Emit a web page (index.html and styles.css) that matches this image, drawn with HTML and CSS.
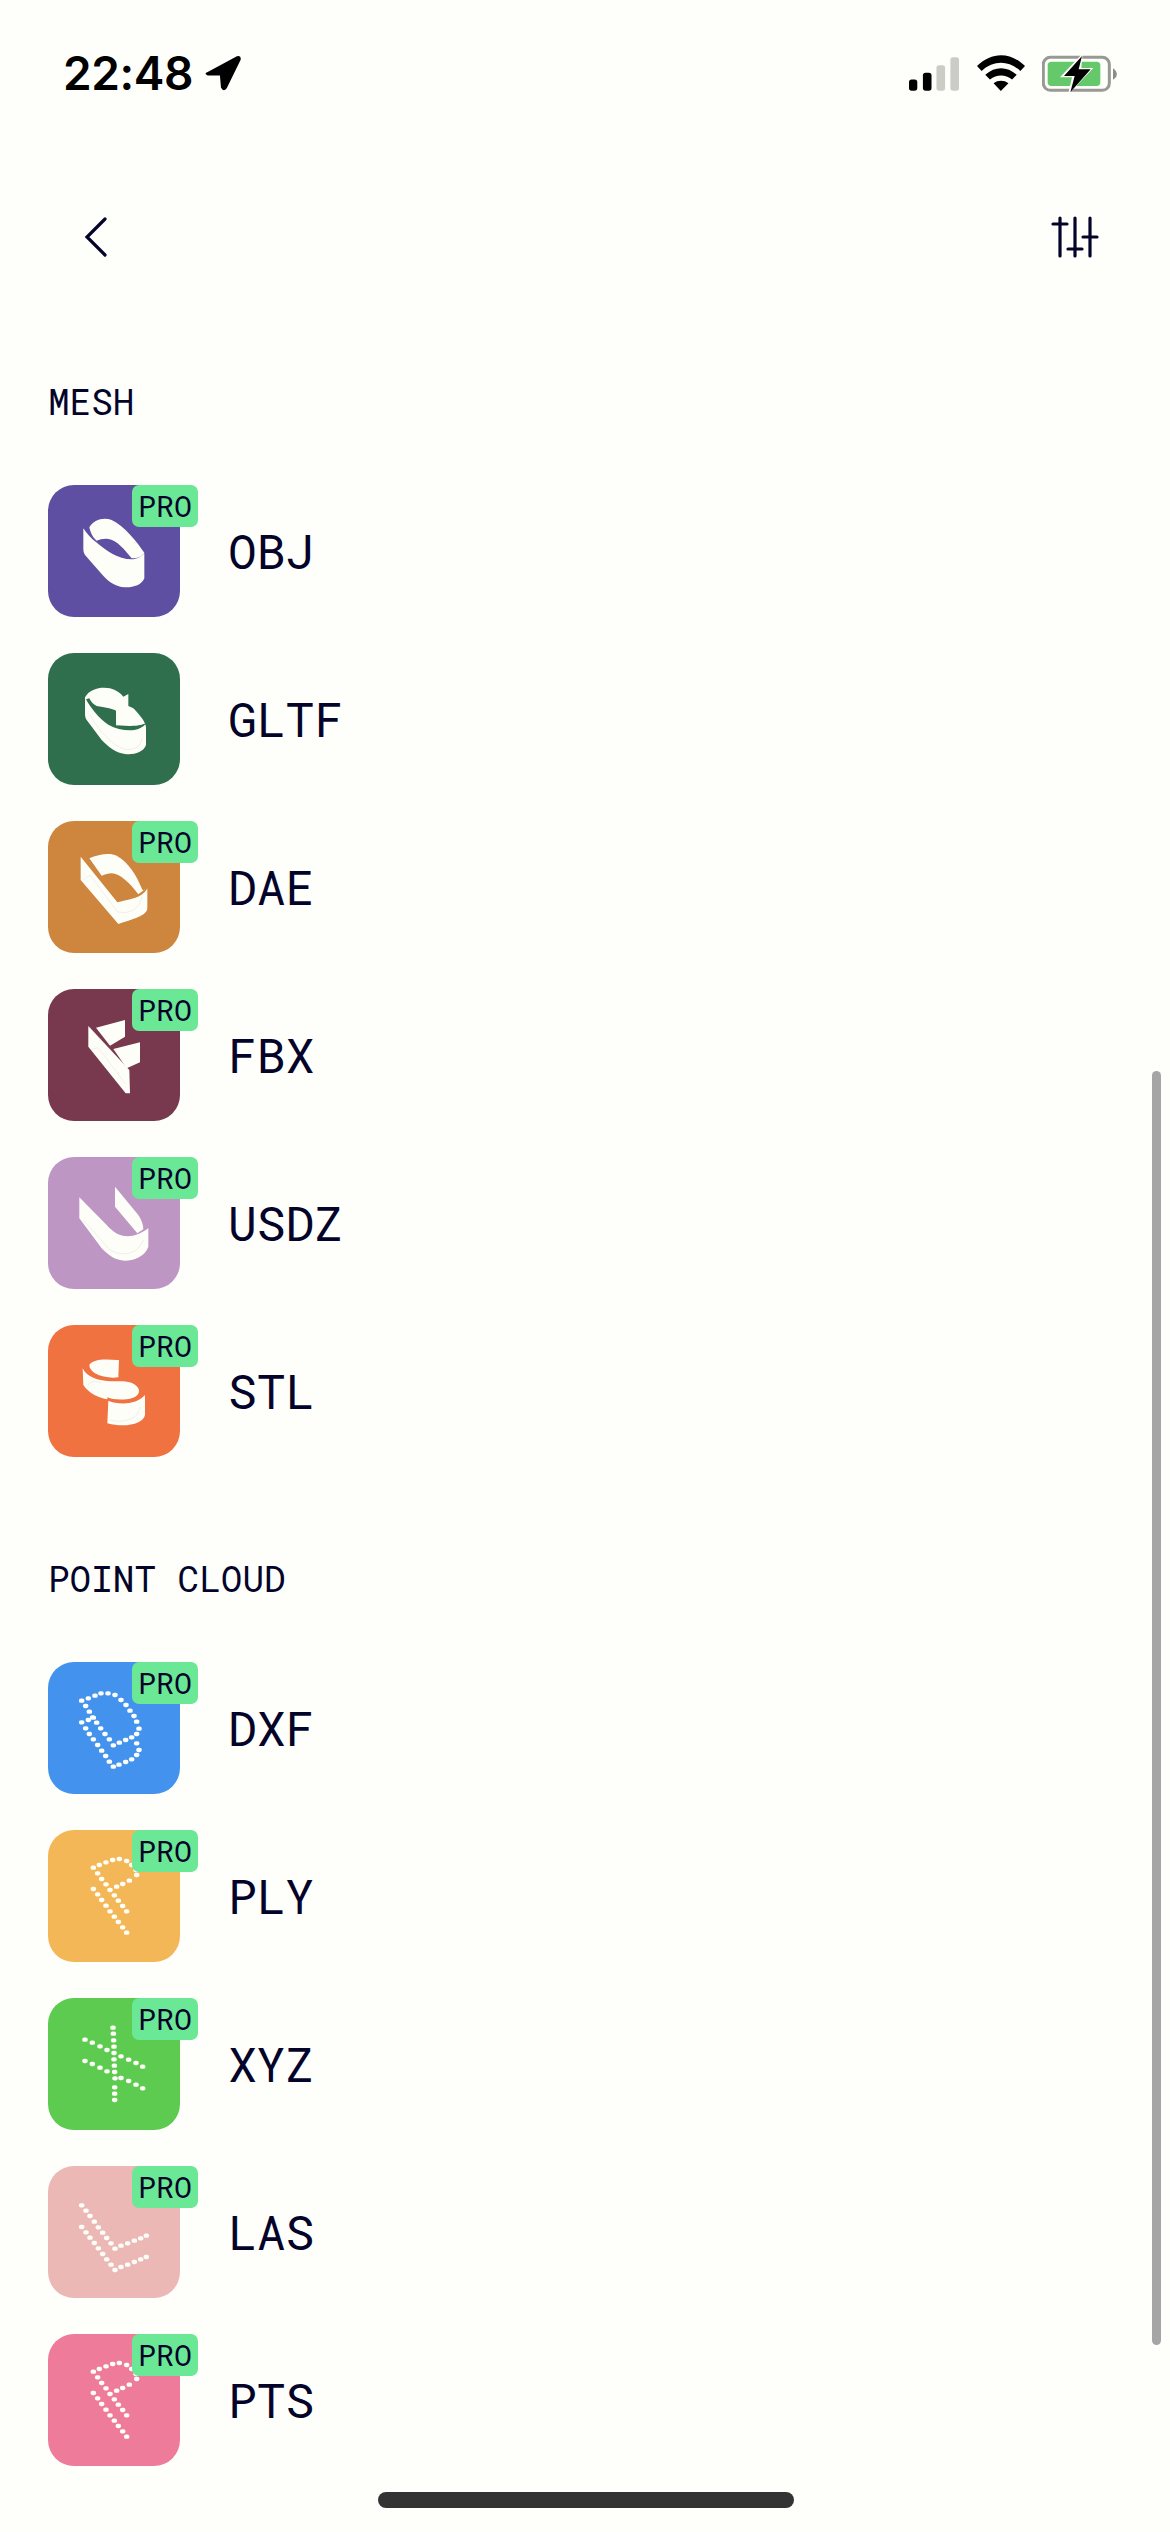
FILE: index.html
```html
<!DOCTYPE html>
<html lang="en">
<head>
<meta charset="utf-8">
<title>Export formats</title>
<link rel="stylesheet" href="styles.css">
</head>
<body>
<div class="screen">
  <header class="status">
    <div class="status-left">
      <span class="time">22:48</span>
      <svg class="loc" viewBox="622 172 106 106"><path d="M630 222 L716 176 Q729 172 727 186 L686 270 Q676 282 669 268 L666 232 L630 232 Q617 227 630 222Z"/></svg>
    </div>
    <div class="status-right">
      <svg class="signal" viewBox="172 171 151 101"><rect x="0" y="67" width="25" height="34" rx="8" transform="translate(172 171)" class="on"/><rect x="42" y="47" width="26" height="54" rx="8" transform="translate(172 171)" class="on"/><rect x="83" y="24" width="26" height="77" rx="8" transform="translate(172 171)" class="off"/><rect x="125" y="0" width="26" height="101" rx="8" transform="translate(172 171)" class="off"/></svg>
      <svg class="wifi" viewBox="375 165 145 108"><path d="M375 198 C420 155 475 155 520 198 L506 213 C470 180 425 180 389 213Z M400 224 C430 198 465 198 495 224 L481 239 C460 222 435 222 414 239Z M425 250 C438 240 457 240 470 250 L447 273Z"/></svg>
      <svg class="battery" viewBox="570 165 225 114"><rect x="574" y="172" width="198" height="99" rx="21" class="bat-frame"/><rect x="587" y="185" width="158" height="73" rx="11" class="bat-fill"/><path d="M783 205 C792 210 796 220 794 226 C793 232 789 236 783 239Z" class="bat-cap"/><path d="M692 160 L624 232 L660 232 L648 284 L724 204 L688 204Z" class="bat-halo"/><path d="M690 168 L636 228 L668 228 L655 277 L716 208 L680 208Z"/></svg>
    </div>
  </header>

  <nav class="nav">
    <svg class="back" viewBox="0 0 26 42"><path d="M22 3 L4 21 L22 39"/></svg>
    <svg class="sliders" viewBox="0 0 48 42"><path d="M9 2V40M24 2V40M39 2V40M2 8H16M17 33H31M32 21H46"/></svg>
  </nav>

  <main class="content">
    <section class="section">
      <h2 class="section-title">MESH</h2>
      <ul class="list">
        <li class="row">
          <div class="tile t-obj">
            <svg class="art" viewBox="54 45 396 396"><path class="solid" d="M178 172 C190 150 220 140 245 150 C285 170 320 215 343 248 C338 258 325 265 305 265 C285 240 260 210 235 207 C222 205 210 208 200 212 C190 205 182 190 178 172Z"/><path class="solid" d="M160 175 C170 190 182 205 198 216 C225 240 265 268 305 268 C320 268 335 260 343 250 L343 325 C335 345 310 353 285 352 C255 350 235 335 215 312 L165 255 C160 248 160 240 160 232Z"/></svg>
            <span class="badge">PRO</span>
          </div>
          <span class="name">OBJ</span>
        </li>
        <li class="row">
          <div class="tile t-gltf">
            <svg class="art" viewBox="54 549 396 396"><path class="solid" d="M165 682 C180 655 215 650 240 655 C258 660 272 670 280 680 L295 672 L295 708 L310 715 C330 735 345 755 348 770 L348 825 C340 848 310 855 285 852 C255 848 235 830 215 810 L170 750 C165 742 165 735 165 725Z"/><path class="cut" d="M168 688 C180 710 205 745 235 764 C265 782 305 784 325 777 C338 772 345 766 347 760 C340 763 330 768 300 768 L258 766 L258 722 C245 715 225 712 200 708 C190 703 182 695 178 685Z"/><path class="trace" d="M180 735 C200 770 240 825 285 838 C310 842 335 830 335 805"/></svg>
          </div>
          <span class="name">GLTF</span>
        </li>
        <li class="row">
          <div class="tile t-dae">
            <svg class="art" viewBox="54 48 396 396"><path class="solid" d="M178 160 C205 148 240 142 260 152 C295 170 322 215 335 250 C338 258 343 257 346 252 L325 268 C300 235 270 205 245 205 C235 205 225 208 215 212Z"/><path class="solid" d="M152 155 L262 292 C290 285 325 280 340 265 C346 260 350 255 352 250 L352 310 C350 330 325 338 265 357 L152 225Z"/><path class="trace" d="M158 225 L180 210 L262 320 C300 330 330 310 335 275"/></svg>
            <span class="badge">PRO</span>
          </div>
          <span class="name">DAE</span>
        </li>
        <li class="row">
          <div class="tile t-fbx">
            <svg class="art" viewBox="54 552 396 396"><path class="solid" d="M175 663 L298 795 L300 865 L287 865 L175 725Z"/><path class="solid" d="M198 668 L285 645 L285 695 L240 722Z"/><path class="solid" d="M250 732 L330 712 L330 772 L290 790Z"/><path class="trace" d="M180 735 L205 728 L285 835"/></svg>
            <span class="badge">PRO</span>
          </div>
          <span class="name">FBX</span>
        </li>
        <li class="row">
          <div class="tile t-usdz">
            <svg class="art" viewBox="54 51 396 396"><path class="solid" d="M148 172 L230 255 C260 290 300 305 355 265 L355 320 C345 350 310 362 285 362 C255 362 235 345 215 325 L148 235Z"/><path class="solid" d="M255 140 L325 225 C335 240 340 255 340 268 L322 280 L255 200Z"/><path class="trace" d="M160 240 L235 325 C265 350 320 350 340 300"/></svg>
            <span class="badge">PRO</span>
          </div>
          <span class="name">USDZ</span>
        </li>
        <li class="row">
          <div class="tile t-stl">
            <svg class="art" viewBox="54 555 396 396"><path class="solid" d="M178 675 C185 660 215 655 262 660 L267 660 L265 712 C245 715 215 712 195 700 C185 693 178 685 178 675Z"/><path class="solid" d="M158 685 C170 710 200 722 240 724 C270 724 310 718 325 745 C332 760 320 775 290 778 C265 780 245 778 232 772 L232 778 C210 775 175 760 160 735Z"/><path class="solid" d="M235 782 C265 795 320 795 345 765 L345 825 C340 850 290 865 232 850Z"/><path class="trace" d="M175 735 C180 720 195 725 215 728 M240 840 C280 850 325 840 330 800"/></svg>
            <span class="badge">PRO</span>
          </div>
          <span class="name">STL</span>
        </li>
      </ul>
    </section>

    <section class="section section-next">
      <h2 class="section-title">POINT CLOUD</h2>
      <ul class="list">
        <li class="row">
          <div class="tile t-dxf">
            <svg class="art" viewBox="54 66 396 396"><path class="dots" d="M153 182h4M173 175h4M193 167h4M211 160h4M232 160h4M253 165h4M271 180h4M286 195h4M298 212h4M310 228h4M318 245h4M325 266h4M318 282h4M303 292h4M285 300h4M266 308h4M248 316h4M236 298h4M223 282h4M210 265h4M198 248h4M186 232h4M176 215h4M165 198h4M153 247h4M173 240h4M188 233h4M165 265h4M176 282h4M188 298h4M201 315h4M213 332h4M225 348h4M236 365h4M248 380h4M265 374h4M285 366h4M303 358h4M318 345h4M325 330h4M318 310h4"/></svg>
            <span class="badge">PRO</span>
          </div>
          <span class="name">DXF</span>
        </li>
        <li class="row">
          <div class="tile t-ply">
            <svg class="art" viewBox="54 570 396 396"><path class="dots" d="M188 683h4M206 675h4M226 667h4M246 660h4M266 657h4M288 663h4M303 675h4M316 690h4M318 705h4M296 722h4M276 732h4M258 740h4M201 700h4M213 717h4M226 733h4M238 750h4M251 766h4M263 782h4M276 798h4M288 814h4M188 747h4M201 763h4M213 780h4M226 797h4M238 814h4M251 830h4M263 846h4M276 862h4M288 878h4"/></svg>
            <span class="badge">PRO</span>
          </div>
          <span class="name">PLY</span>
        </li>
        <li class="row">
          <div class="tile t-xyz">
            <svg class="art" viewBox="54 24 396 396"><path class="dots" d="M247 113h4M248 131h4M249 151h4M250 170h4M250 189h4M250 208h4M251 227h4M252 246h4M253 265h4M252 292h4M252 311h4M252 330h4M163 149h4M185 158h4M208 169h4M229 180h4M271 199h4M294 209h4M316 219h4M336 230h4M163 213h4M185 222h4M208 233h4M229 244h4M271 264h4M294 273h4M316 284h4M336 295h4"/></svg>
            <span class="badge">PRO</span>
          </div>
          <span class="name">XYZ</span>
        </li>
        <li class="row">
          <div class="tile t-las">
            <svg class="art" viewBox="54 528 396 396"><path class="dots" d="M153 646h4M166 662h4M178 678h4M191 695h4M203 712h4M216 728h4M228 744h4M241 760h4M253 776h4M271 767h4M291 760h4M311 752h4M330 745h4M347 737h4M153 711h4M166 727h4M178 743h4M191 759h4M203 775h4M216 792h4M228 808h4M241 824h4M253 840h4M271 831h4M291 824h4M311 816h4M330 808h4M347 801h4"/></svg>
            <span class="badge">PRO</span>
          </div>
          <span class="name">LAS</span>
        </li>
        <li class="row">
          <div class="tile t-pts">
            <svg class="art" viewBox="54 570 396 396"><path class="dots" d="M188 683h4M206 675h4M226 667h4M246 660h4M266 657h4M288 663h4M303 675h4M316 690h4M318 705h4M296 722h4M276 732h4M258 740h4M201 700h4M213 717h4M226 733h4M238 750h4M251 766h4M263 782h4M276 798h4M288 814h4M188 747h4M201 763h4M213 780h4M226 797h4M238 814h4M251 830h4M263 846h4M276 862h4M288 878h4"/></svg>
            <span class="badge">PRO</span>
          </div>
          <span class="name">PTS</span>
        </li>
      </ul>
    </section>
  </main>

  <div class="scrollbar"></div>
  <div class="home"></div>
</div>
</body>
</html>
```
FILE: styles.css
```css
* { box-sizing: border-box; }
html, body { margin: 0; padding: 0; }
body { background: #fefffb; color: #04042a; font-family: "Roboto Mono", "Liberation Mono", monospace; }
.screen { position: relative; width: 1170px; height: 2532px; overflow: hidden; background: #fefffb; }

.status { height: 150px; padding: 55px 53px 0 63px; display: flex; justify-content: space-between; align-items: flex-start; }
.status-left { display: flex; align-items: center; gap: 12px; height: 36px; color: #000; }
.time { font-family: Inter, "Liberation Sans", sans-serif; font-weight: 600; font-size: 46px; line-height: 36px; letter-spacing: -0.4px; }
.loc { width: 36px; height: 36px; fill: #000; }
.status-right { display: flex; align-items: flex-start; }
.signal { width: 50px; height: 34px; margin-top: 2px; }
.signal .on { fill: #000; }
.signal .off { fill: #cbccc6; }
.wifi { width: 48px; height: 36px; margin-left: 18px; fill: #000; }
.battery { width: 75px; height: 38px; margin-left: 17px; }
.bat-frame { fill: none; stroke: #989894; stroke-width: 9; }
.bat-fill { fill: #65c96b; }
.bat-cap { fill: #8d8d89; }
.bat-halo { fill: #fefffb; }

.nav { height: 174px; padding: 0 71px 0 87px; display: flex; justify-content: space-between; align-items: center; }
.back { width: 26px; height: 42px; margin-left: -4px; fill: none; stroke: #04042a; stroke-width: 3.2; stroke-linecap: round; stroke-linejoin: miter; }
.sliders { width: 48px; height: 42px; fill: none; stroke: #04042a; stroke-width: 3.2; stroke-linecap: round; }

.content { padding: 53px 0 0 48px; }
.section-next { margin-top: 97px; }
.section-title { margin: 0 0 60px; font-size: 36px; line-height: 48px; font-weight: 400; }
.list { list-style: none; margin: 0; padding: 0; display: flex; flex-direction: column; gap: 36px; }
.row { display: flex; align-items: center; gap: 48px; }
.tile { position: relative; width: 132px; height: 132px; border-radius: 26px; flex: none; }
.art { display: block; width: 132px; height: 132px; }
.solid { fill: #fefef9; }
.trace { fill: none; stroke: rgba(120, 100, 90, 0.16); stroke-width: 2; }
.dots { fill: none; stroke: #fefef9; stroke-width: 13; stroke-linecap: round; }
.badge { position: absolute; top: 0; right: -18px; width: 66px; height: 42px; border-radius: 7px; background: #6be895; font-size: 30px; line-height: 42px; text-align: center; }
.name { font-size: 48px; line-height: 60px; }

.t-obj { background: #5e4fa2; }
.t-gltf { background: #2f6f4e; }
.t-gltf .cut { fill: #2f6f4e; }
.t-dae { background: #ce853e; }
.t-fbx { background: #78394f; }
.t-usdz { background: #bd96c3; }
.t-stl { background: #ef7240; }
.t-dxf { background: #4393ee; }
.t-ply { background: #f4b757; }
.t-xyz { background: #5ccb50; }
.t-las { background: #ecb8b5; }
.t-pts { background: #ee7b9a; }

.scrollbar { position: absolute; left: 1152px; top: 1071px; width: 9px; height: 1274px; border-radius: 5px; background: #a5a5a5; }
.home { position: absolute; left: 378px; top: 2492px; width: 416px; height: 16px; border-radius: 8px; background: #333; }
```
